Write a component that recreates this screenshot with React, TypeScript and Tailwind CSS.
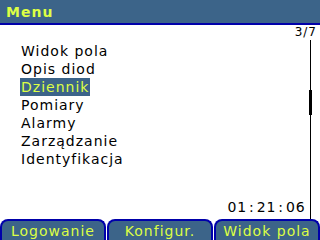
import React from "react";

const items = ["Widok pola", "Opis diod", "Dziennik", "Pomiary", "Alarmy", "Zarządzanie", "Identyfikacja"];
const time = "01:21:06".split("");
const tabs = ["Logowanie", "Konfigur.", "Widok pola"];

export default function App() {
  return (
    <div
      className="w-[320px] h-[240px] bg-white flex flex-col overflow-hidden"
      style={{ fontFamily: "'DejaVu Sans', Verdana, sans-serif" }}
    >
      <div className="h-[25px] bg-[#3c6489] border-b-2 border-[#0000aa] flex items-center px-[6px]">
        <span className="text-[14px] font-bold text-[#ddff44] tracking-[1px] leading-none">Menu</span>
      </div>
      <div className="flex-1 flex flex-col">
        <div className="h-[15px] flex justify-end pr-[3px]">
          <span className="text-[12px] leading-[15px] text-black tracking-[1px]">3/7</span>
        </div>
        <div className="flex-1 flex">
          <div className="flex-1 flex flex-col pt-[2px] pl-[20px] pr-[4px]">
            {items.map((it, i) => (
              <div key={it} className="h-[18px] flex items-center">
                <span
                  className={
                    "text-[14px] leading-[18px] tracking-[1px] px-[1px] " +
                    (i === 2 ? "bg-[#3c6489] text-[#ddff44]" : "text-black")
                  }
                >
                  {it}
                </span>
              </div>
            ))}
            <div className="mt-auto self-end flex pb-[3px]">
              {time.map((c, i) => (
                <span key={i} className="w-[9.75px] text-center text-[14px] leading-[18px] text-black">
                  {c}
                </span>
              ))}
            </div>
          </div>
          <div className="w-[3px] mr-[8px] flex flex-col items-center">
            <div className="w-px h-[50px] bg-black" />
            <div className="w-[3px] h-[25px] bg-black" />
            <div className="w-px flex-1 bg-black" />
          </div>
        </div>
      </div>
      <div className="h-[21px] flex gap-[1px]">
        {tabs.map((t) => (
          <div
            key={t}
            className="flex-1 border-2 border-b-0 border-[#0000aa] rounded-t-[8px] bg-[#3c6489] flex items-center justify-center"
          >
            <span className="text-[14px] leading-none tracking-[1px] text-[#ddff44]">{t}</span>
          </div>
        ))}
      </div>
    </div>
  );
}
